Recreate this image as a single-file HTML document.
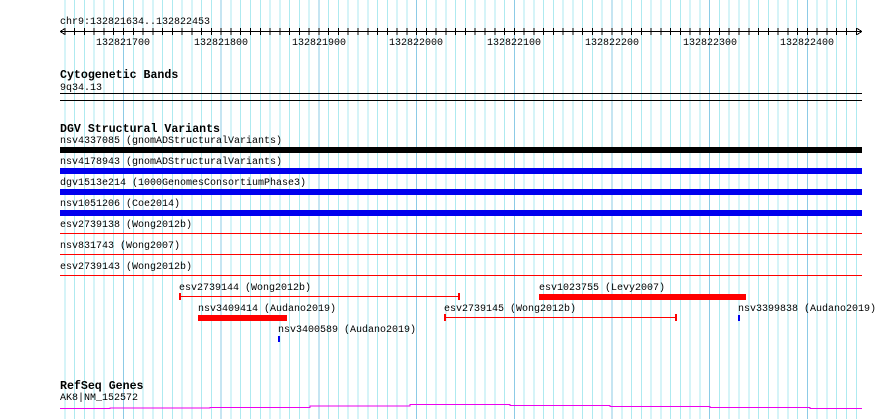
<!DOCTYPE html>
<html><head><meta charset="utf-8"><style>
body{margin:0;width:890px;height:419px;background:#fff;position:relative;overflow:hidden;font-family:"Liberation Mono","DejaVu Sans Mono",monospace;font-size:10px;color:#000}
.t{position:absolute;line-height:12px;white-space:pre;margin-top:2px}
.b{font-weight:bold;font-size:11.6px}
.r{position:absolute}
svg{position:absolute;left:0;top:0}
</style></head><body>
<svg width="890" height="419" shape-rendering="crispEdges">
<path stroke="#aeeaf0" stroke-width="1" d="M64.9 0V419M74.7 0V419M84.4 0V419M94.2 0V419M104 0V419M113.7 0V419M133.3 0V419M143 0V419M152.8 0V419M162.6 0V419M172.4 0V419M182.1 0V419M191.9 0V419M201.7 0V419M211.4 0V419M231 0V419M240.7 0V419M250.5 0V419M260.3 0V419M270.1 0V419M279.8 0V419M289.6 0V419M299.4 0V419M309.1 0V419M328.7 0V419M338.4 0V419M348.2 0V419M358 0V419M367.8 0V419M377.5 0V419M387.3 0V419M397.1 0V419M406.8 0V419M426.4 0V419M436.1 0V419M445.9 0V419M455.7 0V419M465.5 0V419M475.2 0V419M485 0V419M494.8 0V419M504.5 0V419M524.1 0V419M533.8 0V419M543.6 0V419M553.4 0V419M563.2 0V419M572.9 0V419M582.7 0V419M592.5 0V419M602.2 0V419M621.8 0V419M631.5 0V419M641.3 0V419M651.1 0V419M660.9 0V419M670.6 0V419M680.4 0V419M690.2 0V419M699.9 0V419M719.5 0V419M729.2 0V419M739 0V419M748.8 0V419M758.6 0V419M768.3 0V419M778.1 0V419M787.9 0V419M797.6 0V419M817.2 0V419M826.9 0V419M836.7 0V419M846.5 0V419M856.3 0V419"/>
<path stroke="#8ccbe6" stroke-width="1" d="M123.5 0V419M221.2 0V419M318.9 0V419M416.6 0V419M514.3 0V419M612 0V419M709.7 0V419M807.4 0V419"/>
<path stroke="#000" d="M60 31.5H862M60 31.5l5 -3M60 31.5l5 3M862 31.5l-5 -3M862 31.5l-5 3"/>
<path stroke="#000" d="M64.9 28V35M74.7 28V35M84.4 28V35M94.2 28V35M104 28V35M113.7 28V35M123.5 28V35M133.3 28V35M143 28V35M152.8 28V35M162.6 28V35M172.4 28V35M182.1 28V35M191.9 28V35M201.7 28V35M211.4 28V35M221.2 28V35M231 28V35M240.7 28V35M250.5 28V35M260.3 28V35M270.1 28V35M279.8 28V35M289.6 28V35M299.4 28V35M309.1 28V35M318.9 28V35M328.7 28V35M338.4 28V35M348.2 28V35M358 28V35M367.8 28V35M377.5 28V35M387.3 28V35M397.1 28V35M406.8 28V35M416.6 28V35M426.4 28V35M436.1 28V35M445.9 28V35M455.7 28V35M465.5 28V35M475.2 28V35M485 28V35M494.8 28V35M504.5 28V35M514.3 28V35M524.1 28V35M533.8 28V35M543.6 28V35M553.4 28V35M563.2 28V35M572.9 28V35M582.7 28V35M592.5 28V35M602.2 28V35M612 28V35M621.8 28V35M631.5 28V35M641.3 28V35M651.1 28V35M660.9 28V35M670.6 28V35M680.4 28V35M690.2 28V35M699.9 28V35M709.7 28V35M719.5 28V35M729.2 28V35M739 28V35M748.8 28V35M758.6 28V35M768.3 28V35M778.1 28V35M787.9 28V35M797.6 28V35M807.4 28V35M817.2 28V35M826.9 28V35M836.7 28V35M846.5 28V35M856.3 28V35"/>
<rect x="60" y="93" width="802" height="1" fill="#000"/>
<rect x="60" y="100" width="802" height="1" fill="#000"/>
<rect x="60" y="147" width="802" height="6" fill="#000"/>
<rect x="60" y="168" width="802" height="6" fill="#0000ee"/>
<rect x="60" y="189" width="802" height="6" fill="#0000ee"/>
<rect x="60" y="210" width="802" height="6" fill="#0000ee"/>
<rect x="60" y="233" width="802" height="1" fill="#f00"/>
<rect x="60" y="254" width="802" height="1" fill="#f00"/>
<rect x="60" y="275" width="802" height="1" fill="#f00"/>
<rect x="179" y="296" width="280" height="1" fill="#f00"/>
<rect x="179" y="293" width="2" height="7" fill="#f00"/>
<rect x="458" y="293" width="2" height="7" fill="#f00"/>
<rect x="539" y="294" width="207" height="6" fill="#f00"/>
<rect x="198" y="315" width="89" height="6" fill="#f00"/>
<rect x="444" y="317" width="233" height="1" fill="#f00"/>
<rect x="444" y="314" width="2" height="7" fill="#f00"/>
<rect x="675" y="314" width="2" height="7" fill="#f00"/>
<rect x="738" y="315" width="2" height="6" fill="#0000ee"/>
<rect x="278" y="336" width="2" height="6" fill="#0000ee"/>
<path stroke="#ee00ee" fill="none" d="M60 408.5H110V408H210V407.5H310V406H410V404.5H510V405.5H610V406.5H710V407.5H810V408.5H862"/>
</svg>
<div class="t" style="left:60px;top:15px">chr9:132821634..132822453</div>
<div class="t" style="left:96px;top:36px">132821700</div>
<div class="t" style="left:194px;top:36px">132821800</div>
<div class="t" style="left:292px;top:36px">132821900</div>
<div class="t" style="left:389px;top:36px">132822000</div>
<div class="t" style="left:487px;top:36px">132822100</div>
<div class="t" style="left:585px;top:36px">132822200</div>
<div class="t" style="left:683px;top:36px">132822300</div>
<div class="t" style="left:780px;top:36px">132822400</div>
<div class="t b" style="left:60px;top:68px">Cytogenetic Bands</div>
<div class="t" style="left:60px;top:81px">9q34.13</div>
<div class="t b" style="left:60px;top:122px">DGV Structural Variants</div>
<div class="t" style="left:60px;top:134px">nsv4337085 (gnomADStructuralVariants)</div>
<div class="t" style="left:60px;top:155px">nsv4178943 (gnomADStructuralVariants)</div>
<div class="t" style="left:60px;top:176px">dgv1513e214 (1000GenomesConsortiumPhase3)</div>
<div class="t" style="left:60px;top:197px">nsv1051206 (Coe2014)</div>
<div class="t" style="left:60px;top:218px">esv2739138 (Wong2012b)</div>
<div class="t" style="left:60px;top:239px">nsv831743 (Wong2007)</div>
<div class="t" style="left:60px;top:260px">esv2739143 (Wong2012b)</div>
<div class="t" style="left:179px;top:281px">esv2739144 (Wong2012b)</div>
<div class="t" style="left:539px;top:281px">esv1023755 (Levy2007)</div>
<div class="t" style="left:198px;top:302px">nsv3409414 (Audano2019)</div>
<div class="t" style="left:444px;top:302px">esv2739145 (Wong2012b)</div>
<div class="t" style="left:738px;top:302px">nsv3399838 (Audano2019)</div>
<div class="t" style="left:278px;top:323px">nsv3400589 (Audano2019)</div>
<div class="t b" style="left:60px;top:379px">RefSeq Genes</div>
<div class="t" style="left:60px;top:391px">AK8|NM_152572</div>
</body></html>
